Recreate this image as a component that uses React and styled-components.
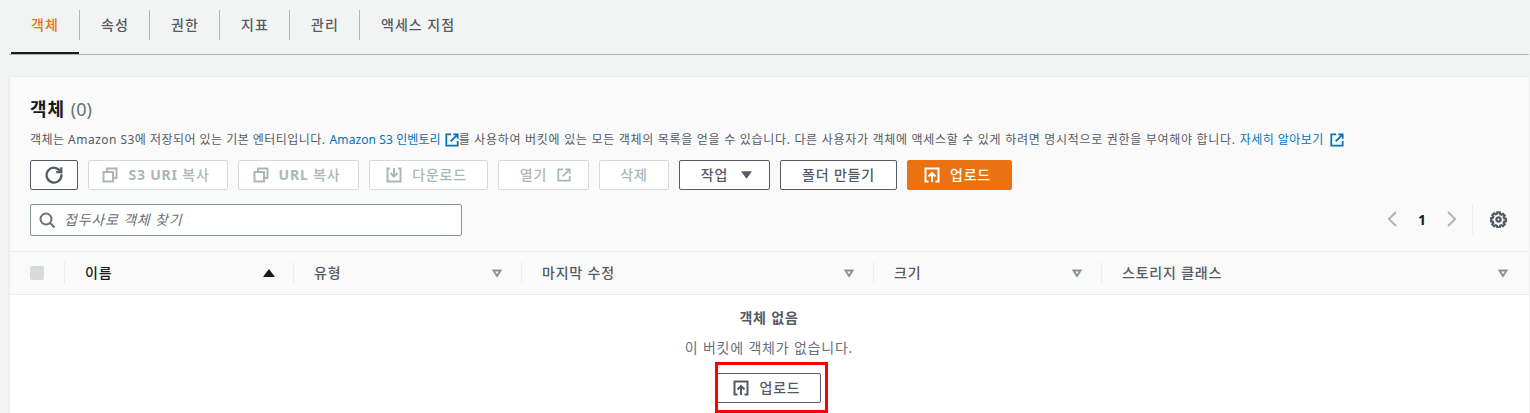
import React from 'react';
import styled, { createGlobalStyle } from 'styled-components';

const Global = createGlobalStyle`
    html, body {
        margin: 0;
        padding: 0;
        background: #f2f3f3;
        overflow: hidden;
    }
    body {
        font-family: "Noto Sans", "Noto Sans CJK KR", sans-serif;
        font-size: 14px;
        letter-spacing: 0.8px;
        color: #16191f;
    }
`;

const Page = styled.div`
    width: 1530px;
    height: 413px;
    overflow: hidden;
    padding: 0 1px 0 9px;
    box-sizing: border-box;
`;

const Tabs = styled.div`
    display: flex;
    height: 55px;
    box-sizing: border-box;
    padding: 10px 0 0 1px;
    border-bottom: 1px solid #aab7b8;
`;

const Tab = styled.div`
    position: relative;
    width: ${props => props.$wide ? 'auto' : '70px'};
    padding: ${props => props.$wide ? '0 21px 2px' : '0 0 2px 1px'};
    height: 30px;
    box-sizing: border-box;
    display: flex;
    align-items: center;
    justify-content: center;
    font-size: 14px;
    font-weight: 500;
    letter-spacing: 1px;
    color: ${props => props.$active ? '#ec7211' : '#545b64'};
    border-right: ${props => props.$last ? 'none' : '1px solid #aab7b8'};
    &::after {
        content: '';
        display: ${props => props.$active ? 'block' : 'none'};
        position: absolute;
        left: 1px;
        right: 0;
        bottom: -14px;
        height: 2px;
        background: #16191f;
    }
`;

const Panel = styled.section`
    margin-top: 21px;
    background: #fff;
    border-top: 1px solid #eaeded;
    border-left: 1px solid #eaeded;
    box-shadow: 0 1px 1px rgba(0, 28, 36, 0.1);
`;

const PanelHead = styled.div`
    background: #fafafa;
    padding: 19px 20px 15px 20px;
    height: 175px;
    box-sizing: border-box;
    border-bottom: 1px solid #eaeded;
`;

const Title = styled.h2`
    margin: 0;
    font-size: 18px;
    line-height: 26px;
    font-weight: 700;
    letter-spacing: 1px;
    color: #16191f;
    span {
        font-weight: 400;
        letter-spacing: 0;
        color: #687078;
    }
`;

const Desc = styled.p`
    margin: 9px 0 0;
    font-size: 12px;
    line-height: 18px;
    letter-spacing: 0.47px;
    color: #545b64;
    white-space: nowrap;
    display: flex;
    align-items: center;
`;

const DescRest = styled.span`
    letter-spacing: 0.7px;
`;

const Ext = styled.a`
    color: #0073bb;
    display: inline-flex;
    align-items: center;
    gap: ${props => props.$gap}px;
    margin-left: 4px;
    letter-spacing: ${props => props.$ls}px;
`;

const Toolbar = styled.div`
    display: flex;
    gap: 10px;
    margin-top: 11px;
`;

const Button = styled.button`
    height: 30px;
    width: ${props => props.$w}px;
    padding: 0 ${props => props.$lead ? 4 : 0}px 0 ${props => props.$tail ? 4 : 0}px;
    box-sizing: border-box;
    display: flex;
    align-items: center;
    justify-content: center;
    gap: ${props => props.$gap || 10}px;
    font-family: inherit;
    font-size: 14px;
    font-weight: 500;
    letter-spacing: 0.8px;
    border-radius: 2px;
    border: 1px solid ${props => props.$off ? '#d5dbdb' : props.$primary ? '#ec7211' : '#545b64'};
    background: ${props => props.$off ? '#fff' : props.$primary ? '#ec7211' : '#fff'};
    color: ${props => props.$off ? '#aab7b8' : props.$primary ? '#fff' : '#545b64'};
`;

// Korean glyphs sit a little low in the line, this lifts the text off the icons
const Label = styled.span`
    padding-bottom: 2px;
`;

const Latin = styled.b`
    font-weight: 700;
`;

const SearchRow = styled.div`
    display: flex;
    justify-content: space-between;
    align-items: flex-start;
    margin-top: 14px;
`;

const Search = styled.div`
    width: 432px;
    height: 32px;
    box-sizing: border-box;
    border: 1px solid #879596;
    border-radius: 2px;
    background: #fff;
    display: flex;
    align-items: center;
    gap: 9px;
    padding-left: 8px;
    font-size: 14px;
    font-style: italic;
    color: #687078;
`;

const Pager = styled.div`
    display: flex;
    align-items: center;
    height: 30px;
    margin-right: 2px;
`;

const PageNum = styled.span`
    width: 48px;
    text-align: center;
    font-size: 14px;
    font-weight: 700;
    letter-spacing: 0;
    color: #16191f;
`;

const Settings = styled.div`
    margin-left: 14px;
    padding-left: 17px;
    height: 30px;
    display: flex;
    align-items: center;
    border-left: 1px solid #eaeded;
    color: #545b64;
`;

const HeadRow = styled.div`
    display: grid;
    grid-template-columns: 54px 229px 228px 352px 228px 1fr;
    height: 43px;
    background: #fafafa;
    border-bottom: 1px solid #eaeded;
    box-sizing: border-box;
    align-items: center;
`;

const CheckCell = styled.div`
    padding-left: 20px;
    display: flex;
    align-items: center;
`;

const Check = styled.div`
    width: 14px;
    height: 14px;
    background: #d5dbdb;
    border-radius: 2px;
`;

const HeadCell = styled.div`
    height: 22px;
    box-sizing: border-box;
    border-left: 1px solid #eaeded;
    padding: 0 ${props => props.$end ? 21 : props.$sorted ? 18 : 19}px 0 20px;
    display: flex;
    align-items: center;
    justify-content: space-between;
    font-size: 14px;
    font-weight: 500;
    color: ${props => props.$sorted ? '#16191f' : '#545b64'};
`;

const Empty = styled.div`
    background: #fff;
    height: 119px;
    display: flex;
    flex-direction: column;
    align-items: center;
    padding: 12px 1px 0 0;
    box-sizing: border-box;
`;

const EmptyTitle = styled.div`
    font-size: 14px;
    line-height: 22px;
    font-weight: 700;
    color: #545b64;
`;

const EmptyText = styled.div`
    margin-top: 8px;
    font-size: 14px;
    line-height: 22px;
    color: #687078;
`;

const Marked = styled.div`
    position: relative;
    margin-top: 14px;
`;

const RedBox = styled.div`
    position: absolute;
    top: -11px;
    left: -2px;
    right: -7px;
    bottom: -10px;
    border: 3px solid #f00;
    pointer-events: none;
`;

const Svg = ({ size = 16, children, ...rest }) => (
    <svg width={size} height={size} viewBox="0 0 16 16" fill="none" stroke="currentColor" strokeWidth="2" {...rest}>
        {children}
    </svg>
);

const ExtIcon = ({ size = 14 }) => (
    <Svg size={size}>
        <path d="M7 1.5H1.5v13h13V9" />
        <path d="M9.5 1.5h5v5M14.5 1.5L6.5 9.5" />
    </Svg>
);

const Refresh = () => (
    <Svg size={18}>
        <path d="M13.8 5A6.6 6.6 0 1 0 14.6 8" strokeLinecap="round" />
        <path d="M14.5 1v4.5H10" />
    </Svg>
);

const Copy = () => (
    <Svg>
        <path d="M5 5V1.5h9.5V11H11" />
        <rect x="1.5" y="5" width="9.5" height="9.5" />
    </Svg>
);

const Download = () => (
    <Svg>
        <path d="M4 1.5H1.5v13h13v-13H12" />
        <path d="M8 1v8M4.5 6L8 9.5 11.5 6" />
    </Svg>
);

const Upload = () => (
    <Svg>
        <path d="M4.5 14.5h-3v-13h13v13h-3" />
        <path d="M8 15V6.5M4.5 9.5L8 6l3.5 3.5" />
    </Svg>
);

const SearchIcon = () => (
    <Svg>
        <circle cx="7" cy="7" r="5.5" />
        <path d="M11 11l4.5 4.5" />
    </Svg>
);

const Gear = () => (
    <svg width="17" height="17" viewBox="-1 -1 18 18" fill="none" stroke="currentColor" strokeWidth="2.4">
        <circle cx="8" cy="8" r="2.2" />
        <path d="M6.7 0.5h2.6l.4 1.9 1.4.6 1.6-1 1.8 1.8-1 1.6.6 1.4 1.9.4v2.6l-1.9.4-.6 1.4 1 1.6-1.8 1.8-1.6-1-1.4.6-.4 1.9H6.7l-.4-1.9-1.4-.6-1.6 1-1.8-1.8 1-1.6-.6-1.4-1.9-.4V6.7l1.9-.4.6-1.4-1-1.6 1.8-1.8 1.6 1 1.4-.6z" />
    </svg>
);

const Chevron = ({ left }) => (
    <svg width="12" height="16" viewBox="0 0 12 16" fill="none" stroke="#aab7b8" strokeWidth="2">
        <path d={left ? 'M10 1L3 8l7 7' : 'M2 1l7 7-7 7'} />
    </svg>
);

const Caret = () => (
    <svg width="11" height="8" viewBox="0 0 12 8" fill="#545b64"><path d="M0 0h12L6 8z" /></svg>
);

const SortUp = () => (
    <svg width="12" height="8" viewBox="0 0 12 8" fill="#16191f"><path d="M6 0l6 8H0z" /></svg>
);

const SortNone = () => (
    <svg width="10" height="9" viewBox="0 0 10 9" fill="none" stroke="#879596" strokeWidth="2"><path d="M1.5 1.5h7L5 7z" /></svg>
);

const columns = ['유형', '마지막 수정', '크기'];

const App = () => (
    <Page>
        <Global />
        <Tabs>
            <Tab $active>객체</Tab>
            <Tab>속성</Tab>
            <Tab>권한</Tab>
            <Tab>지표</Tab>
            <Tab>관리</Tab>
            <Tab $wide $last>액세스 지점</Tab>
        </Tabs>
        <Panel>
            <PanelHead>
                <Title>객체 <span>(0)</span></Title>
                <Desc>
                    객체는 Amazon S3에 저장되어 있는 기본 엔터티입니다.
                    <Ext $gap={4} $ls={0.1}>Amazon S3 인벤토리 <ExtIcon /></Ext>
                    <DescRest>를 사용하여 버킷에 있는 모든 객체의 목록을 얻을 수 있습니다. 다른 사용자가 객체에 액세스할 수 있게 하려면 명시적으로 권한을 부여해야 합니다.</DescRest>
                    <Ext $gap={6} $ls={0.45}>자세히 알아보기 <ExtIcon /></Ext>
                </Desc>
                <Toolbar>
                    <Button $w={48}><Refresh /></Button>
                    <Button $w={140} $off $lead><Copy /><Label><Latin>S3 URI</Latin> 복사</Label></Button>
                    <Button $w={121} $off $lead><Copy /><Label><Latin>URL</Latin> 복사</Label></Button>
                    <Button $w={119} $off $lead><Download /><Label>다운로드</Label></Button>
                    <Button $w={91} $off $tail><Label>열기</Label> <ExtIcon /></Button>
                    <Button $w={70} $off><Label>삭제</Label></Button>
                    <Button $w={91} $gap={13} $tail><Label>작업</Label> <Caret /></Button>
                    <Button $w={117}><Label>폴더 만들기</Label></Button>
                    <Button $w={105} $primary $lead><Upload /><Label>업로드</Label></Button>
                </Toolbar>
                <SearchRow>
                    <Search><SearchIcon /><Label>접두사로 객체 찾기</Label></Search>
                    <Pager>
                        <Chevron left />
                        <PageNum>1</PageNum>
                        <Chevron />
                        <Settings><Gear /></Settings>
                    </Pager>
                </SearchRow>
            </PanelHead>
            <HeadRow>
                <CheckCell><Check /></CheckCell>
                <HeadCell $sorted><Label>이름</Label> <SortUp /></HeadCell>
                {columns.map(name => (
                    <HeadCell key={name}><Label>{name}</Label> <SortNone /></HeadCell>
                ))}
                <HeadCell $end><Label>스토리지 클래스</Label> <SortNone /></HeadCell>
            </HeadRow>
            <Empty>
                <EmptyTitle>객체 없음</EmptyTitle>
                <EmptyText>이 버킷에 객체가 없습니다.</EmptyText>
                <Marked>
                    <Button $w={104} $lead><Upload /><Label>업로드</Label></Button>
                    <RedBox />
                </Marked>
            </Empty>
        </Panel>
    </Page>
);

export default App;
